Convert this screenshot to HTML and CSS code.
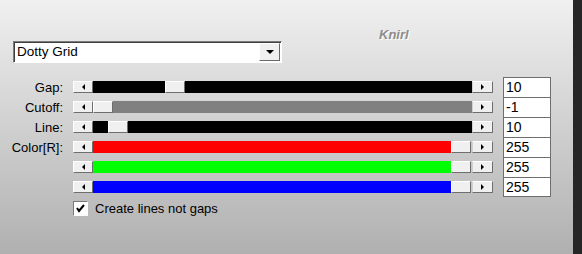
FILE: index.html
```html
<!DOCTYPE html>
<html>
<head>
<meta charset="utf-8">
<link rel="stylesheet" href="styles.css">
</head>
<body>
<div class="panel">
  <div class="brand">Knirl</div>
  <div class="dropdown">
    <span class="dd-text">Dotty Grid</span>
    <span class="dd-btn"><span class="tri-down"></span></span>
  </div>
  <div class="rows">
    <div class="row">
      <div class="label">Gap:</div>
      <div class="slider">
        <span class="sbtn left"></span>
        <span class="track black"><span class="spacer" style="width:72px"></span><span class="thumb"></span></span>
        <span class="sbtn right"></span>
      </div>
      <div class="num first">10</div>
    </div>
    <div class="row">
      <div class="label">Cutoff:</div>
      <div class="slider">
        <span class="sbtn left"></span>
        <span class="track gray"><span class="spacer" style="width:0px"></span><span class="thumb"></span></span>
        <span class="sbtn right"></span>
      </div>
      <div class="num">-1</div>
    </div>
    <div class="row">
      <div class="label">Line:</div>
      <div class="slider">
        <span class="sbtn left"></span>
        <span class="track black"><span class="spacer" style="width:15px"></span><span class="thumb"></span></span>
        <span class="sbtn right"></span>
      </div>
      <div class="num">10</div>
    </div>
    <div class="row">
      <div class="label">Color[R]:</div>
      <div class="slider">
        <span class="sbtn left"></span>
        <span class="track red"><span class="spacer" style="width:358px"></span><span class="thumb"></span></span>
        <span class="sbtn right"></span>
      </div>
      <div class="num">255</div>
    </div>
    <div class="row">
      <div class="label"></div>
      <div class="slider">
        <span class="sbtn left"></span>
        <span class="track green"><span class="spacer" style="width:358px"></span><span class="thumb"></span></span>
        <span class="sbtn right"></span>
      </div>
      <div class="num">255</div>
    </div>
    <div class="row">
      <div class="label"></div>
      <div class="slider">
        <span class="sbtn left"></span>
        <span class="track blue"><span class="spacer" style="width:358px"></span><span class="thumb"></span></span>
        <span class="sbtn right"></span>
      </div>
      <div class="num last">255</div>
    </div>
  </div>
  <div class="check-row">
    <span class="checkbox">
      <svg width="11" height="11" viewBox="0 0 11 11"><polyline points="2,5 4,8 9,2" fill="none" stroke="#000" stroke-width="2"/></svg>
    </span>
    <span class="check-label">Create lines not gaps</span>
  </div>
</div>
<div class="strip"></div>
</body>
</html>
```
FILE: styles.css
```css
html, body {
  margin: 0;
  padding: 0;
}
body {
  width: 582px;
  height: 254px;
  display: flex;
  font-family: "Liberation Sans", Arial, sans-serif;
  font-size: 13px;
  color: #000;
  overflow: hidden;
}
.panel {
  flex: 1;
  background: linear-gradient(#f0f0f0, #b0b0b0);
  padding-top: 29px;
  box-sizing: border-box;
}
.strip {
  width: 9px;
  background: #262626;
}
.brand {
  height: 12px;
  line-height: 12px;
  padding-left: 379px;
  font-weight: bold;
  font-style: italic;
  font-size: 13px;
  color: #8c8c8c;
  text-shadow: 1px 1px 0 #ffffff;
}
.dropdown {
  margin-left: 13px;
  width: 269px;
  height: 22px;
  box-sizing: border-box;
  border-top: 1px solid #7a7a7a;
  border-left: 1px solid #7a7a7a;
  border-right: 1px solid #ffffff;
  border-bottom: 1px solid #ffffff;
  box-shadow: inset 1px 1px 0 #404040;
  background: #fff;
  display: flex;
  align-items: center;
  justify-content: space-between;
  padding: 1px 1px 1px 3px;
}
.dd-text {
  line-height: 18px;
  font-size: 13.5px;
}
.dd-btn {
  width: 21px;
  height: 18px;
  box-sizing: border-box;
  background: #f0f0f0;
  border-top: 1px solid #ffffff;
  border-left: 1px solid #ffffff;
  border-right: 1px solid #696969;
  border-bottom: 1px solid #696969;
  display: flex;
  align-items: center;
  justify-content: center;
}
.tri-down {
  width: 0;
  height: 0;
  border-left: 4px solid transparent;
  border-right: 4px solid transparent;
  border-top: 4px solid #000;
}
.rows {
  margin-top: 14px;
  display: flex;
  flex-direction: column;
}
.row {
  display: grid;
  grid-template-columns: 63px 420px 48px;
  column-gap: 10px;
  height: 20px;
}
.label {
  text-align: right;
  line-height: 20px;
  padding-top: 1px;
}
.slider {
  margin-top: 4px;
  height: 12px;
  display: flex;
}
.sbtn {
  flex: none;
  width: 20px;
  height: 12px;
  box-sizing: border-box;
  background: #f0f0f0;
  border-top: 1px solid #ffffff;
  border-left: 1px solid #ffffff;
  border-right: 1px solid #6e6e6e;
  border-bottom: 1px solid #6e6e6e;
  display: flex;
  align-items: center;
  justify-content: center;
}
.sbtn.right {
  width: 21px;
  border-left: 1px solid #d0d0d0;
}
.sbtn.left::before {
  content: "";
  width: 0;
  height: 0;
  border-top: 3px solid transparent;
  border-bottom: 3px solid transparent;
  border-right: 3px solid #000;
}
.sbtn.right::before {
  content: "";
  width: 0;
  height: 0;
  border-top: 3px solid transparent;
  border-bottom: 3px solid transparent;
  border-left: 3px solid #000;
}
.track {
  flex: 1;
  display: flex;
  height: 12px;
}
.track.black { background: #000; }
.track.gray { background: #808080; }
.track.red { background: #ff0000; }
.track.green { background: #00ff00; }
.track.blue { background: #0000ff; }
.track.red, .track.green, .track.blue {
  box-shadow: inset -1px 0 0 #c8c8c8;
}
.spacer {
  flex: none;
  height: 12px;
}
.thumb {
  flex: none;
  width: 20px;
  height: 12px;
  box-sizing: border-box;
  background: #f0f0f0;
  border-top: 1px solid #ffffff;
  border-left: 1px solid #ffffff;
  border-right: 1px solid #6e6e6e;
  border-bottom: 1px solid #6e6e6e;
}
.num {
  height: 20px;
  box-sizing: border-box;
  background: #fff;
  border: 1px solid #6e6e6e;
  border-bottom: none;
  padding-left: 2px;
  font-size: 14px;
  line-height: 19px;
}
.num.last {
  height: 20px;
  border-bottom: 1px solid #6e6e6e;
  line-height: 18px;
}
.check-row {
  margin-top: 4px;
  padding-left: 73px;
  display: flex;
  align-items: center;
  height: 15px;
}
.checkbox {
  width: 15px;
  height: 15px;
  box-sizing: border-box;
  background: #fff;
  border-top: 1px solid #7a7a7a;
  border-left: 1px solid #7a7a7a;
  border-right: 1px solid #ffffff;
  border-bottom: 1px solid #ffffff;
  display: flex;
  align-items: center;
  justify-content: center;
}
.check-label {
  margin-left: 7px;
  line-height: 15px;
}
```
